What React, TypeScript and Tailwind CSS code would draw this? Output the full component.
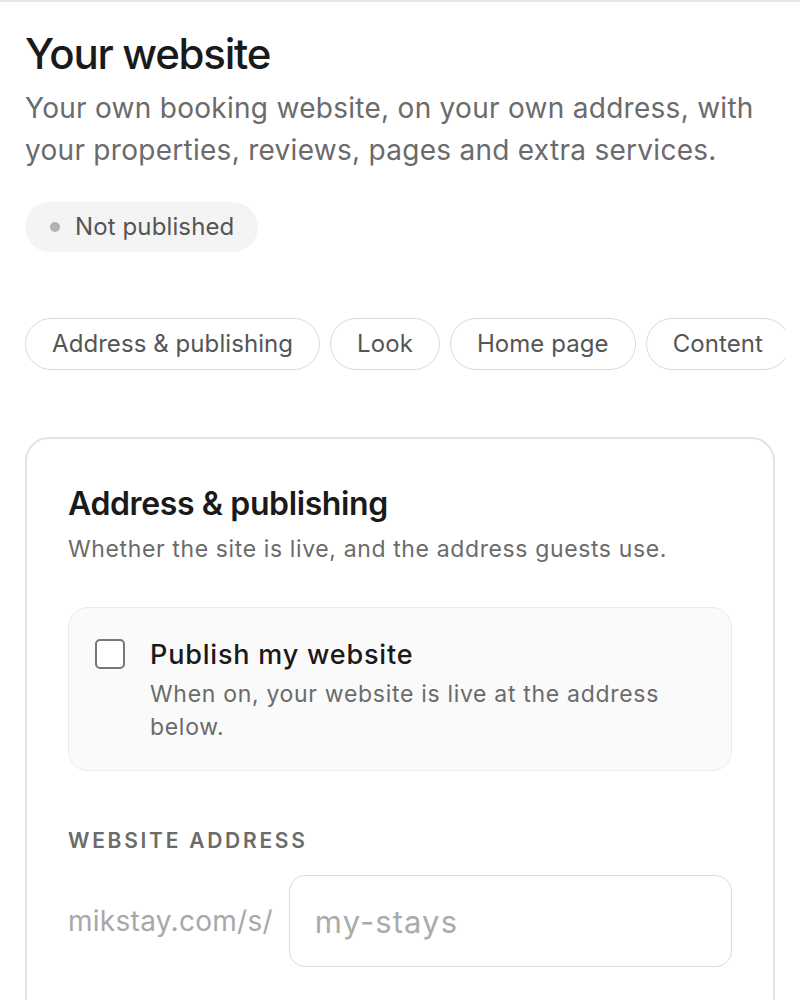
import { useState } from 'react';

const TABS = ['Address & publishing', 'Look', 'Home page', 'Content'];

export default function App() {
  const [published, setPublished] = useState(false);
  const [slug, setSlug] = useState('');

  return (
    <div className="min-h-screen bg-white border-t-2 border-[#e6e6e6] font-['Inter',sans-serif] overflow-hidden">
      <div className="pl-[25px] pr-[25px] pt-[27px]">
        {/* Header */}
        <h1 className="text-[42px] leading-[50px] font-medium tracking-[-0.03em] text-[#1a1a1a]">
          Your website
        </h1>
        <p className="mt-[8px] text-[28px] leading-[42px] tracking-[0.01em] text-[#6b6b6b]">
          Your own booking website, on your own address, with your properties, reviews, pages and extra services.
        </p>

        <div className="mt-[31px] inline-flex items-center gap-[15px] h-[50px] pl-[25px] pr-[24px] rounded-full bg-[#f4f4f4]">
          <span className="w-[10px] h-[10px] rounded-full bg-[#b3b3b3]" />
          <span className="text-[24px] tracking-[0.005em] text-[#555]">Not published</span>
        </div>

        {/* Tabs */}
        <div className="mt-[66px] mr-[-10px] flex gap-[10px] overflow-hidden">
          {TABS.map((t) => (
            <button
              key={t}
              className="shrink-0 h-[52px] px-[26px] rounded-full border-[1.5px] border-[#dadada] bg-white text-[24px] tracking-[0.003em] text-[#555]"
            >
              {t}
            </button>
          ))}
        </div>

        {/* Section card */}
        <div className="mt-[67px] rounded-[24px] border-2 border-[#e3e3e3] px-[41px] pt-[46px] pb-[60px]">
          <h2 className="text-[32px] leading-[38px] font-semibold tracking-[-0.012em] text-[#1a1a1a]">
            Address &amp; publishing
          </h2>
          <p className="mt-[10px] text-[23px] leading-[33px] tracking-[0.027em] text-[#6b6b6b]">
            Whether the site is live, and the address guests use.
          </p>

          <label className="mt-[41px] flex items-start gap-[25px] rounded-[20px] border border-[#ebebeb] bg-[#fafafa] pl-[26px] pr-[26px] pt-[30px] pb-[26px] cursor-pointer">
            <input
              type="checkbox"
              checked={published}
              onChange={(e) => setPublished(e.target.checked)}
              className="mt-[1px] w-[30px] h-[30px] shrink-0 appearance-none rounded-[5px] border-2 border-[#777] bg-white checked:bg-[#1a1a1a]"
            />
            <div>
              <div className="text-[27px] leading-[34px] font-medium tracking-[0.03em] text-[#1a1a1a]">Publish my website</div>
              <div className="mt-[6px] text-[23px] leading-[33px] tracking-[0.03em] text-[#6b6b6b]">
                When on, your website is live at the address below.
              </div>
            </div>
          </label>

          <div className="mt-[56px] text-[21px] leading-[28px] font-semibold tracking-[0.13em] uppercase text-[#6b6b6b]">
            Website address
          </div>
          <div className="mt-[20px] flex items-center gap-[16px]">
            <span className="text-[28px] tracking-[0.01em] text-[#a8a8a8] shrink-0">mikstay.com/s/</span>
            <input
              value={slug}
              onChange={(e) => setSlug(e.target.value)}
              placeholder="my-stays"
              className="flex-1 min-w-0 h-[92px] rounded-[16px] border-[1.5px] border-[#dcdcdc] px-[25px] text-[31px] tracking-[0.035em] text-[#1a1a1a] placeholder:text-[#ababab] outline-none"
            />
          </div>
        </div>
      </div>
    </div>
  );
}
